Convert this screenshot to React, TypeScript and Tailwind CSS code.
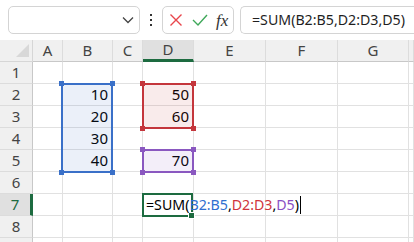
const cols = ["A", "B", "C", "D", "E", "F", "G", ""];
const rows = [1, 2, 3, 4, 5, 6, 7, 8, 9];

const values: Record<string, string> = {
  B2: "10",
  B3: "20",
  B4: "30",
  B5: "40",
  D2: "50",
  D3: "60",
  D5: "70",
};

const blue = "text-[#2f6fd0]";
const red = "text-[#d0343c]";
const purple = "text-[#8a4fc4]";

function Handle({ className }: { className: string }) {
  return <div className={`absolute w-[5px] h-[5px] ${className}`} />;
}

function Range({ box, color, fill }: { box: string; color: string; fill: string }) {
  return (
    <div className={`absolute border-2 ${box} ${color} ${fill}`}>
      <Handle className="-left-[4px] -top-[4px] bg-current" />
      <Handle className="-right-[4px] -top-[4px] bg-current" />
      <Handle className="-left-[4px] -bottom-[4px] bg-current" />
      <Handle className="-right-[4px] -bottom-[4px] bg-current" />
    </div>
  );
}

export default function App() {
  return (
    <div className="w-[414px] h-[242px] overflow-hidden bg-white font-['Noto_Sans','Open_Sans',sans-serif] text-[#1f1f1f]">
      {/* formula bar */}
      <div className="h-[40px] flex items-start pt-[6px] pl-[8px] gap-0">
        <div className="w-[132px] h-[28px] rounded-[5px] border border-[#d4d4d4] flex items-center justify-end pr-[5px]">
          <svg width="12" height="8" viewBox="0 0 12 8" fill="none" stroke="#444" strokeWidth="1.3">
            <path d="M1 1.5 L6 6.5 L11 1.5" />
          </svg>
        </div>
        <div className="w-[22px] h-[28px] flex flex-col items-center justify-center gap-[3px]">
          <span className="w-[2px] h-[2px] bg-[#333]" />
          <span className="w-[2px] h-[2px] bg-[#333]" />
          <span className="w-[2px] h-[2px] bg-[#333]" />
        </div>
        <div className="w-[72px] h-[28px] rounded-[5px] border border-[#d4d4d4] flex items-center pl-[6px] gap-[9px]">
          <svg width="14" height="14" viewBox="0 0 14 14" stroke="#e8464c" strokeWidth="1.4">
            <path d="M1.5 1.5 L12.5 12.5 M12.5 1.5 L1.5 12.5" />
          </svg>
          <svg width="16" height="14" viewBox="0 0 16 14" fill="none" stroke="#3fa85a" strokeWidth="1.4">
            <path d="M1 7 L6 12 L15 2" />
          </svg>
          <span className="font-['Liberation_Serif',serif] italic text-[17px] leading-none text-[#333] -ml-[1px]">
            fx
          </span>
        </div>
        <div className="ml-[6px] flex-1 h-[28px] rounded-l-[5px] border border-r-0 border-[#d4d4d4] flex items-center pl-[11px] text-[14.2px] whitespace-nowrap">
          =SUM(B2:B5,D2:D3,D5)
        </div>
      </div>

      {/* grid */}
      <div className="relative">
        <div className="grid grid-cols-[33px_30px_50px_30px_51px_72px_72px_71px_1fr] auto-rows-[22px]">
          <div className="bg-[#f0f0f0] border-r border-b border-[#d6d6d6] relative">
            <svg className="absolute right-[3px] bottom-[4px]" width="13" height="13" viewBox="0 0 13 13">
              <path d="M13 0 L13 13 L0 13 Z" fill="#d8d8d8" />
            </svg>
          </div>
          {cols.map((c, i) => (
            <div
              key={i}
              className={`flex items-center justify-center text-[15px] text-[#444] border-r border-[#dcdcdc] ${
                c === "D"
                  ? "bg-[#e0e0e0] border-b-[3px] border-b-[#1d6b40] text-[#1d6b40]"
                  : "bg-[#f0f0f0] border-b border-b-[#c8c8c8]"
              }`}
            >
              {c}
            </div>
          ))}
          {rows.map((r) => (
            <div key={r} className="contents">
              <div
                className={`flex items-center justify-center text-[15px] border-b border-[#dcdcdc] ${
                  r === 7
                    ? "bg-[#e0e0e0] border-r-[3px] border-r-[#1d6b40] text-[#1d6b40]"
                    : "bg-[#f0f0f0] border-r border-r-[#c8c8c8] text-[#444]"
                }`}
              >
                {r < 9 ? r : ""}
              </div>
              {cols.map((c, i) => {
                const id = `${c}${r}`;
                return (
                  <div
                    key={i}
                    className="relative border-r border-b border-[#e1e1e1] flex items-center justify-end pr-[4px] text-[15px] text-black"
                  >
                    {values[id]}
                    {id === "D7" && (
                      <div className="absolute left-[3px] top-0 h-full flex items-center whitespace-nowrap z-10 text-[14.2px]">
                        <span>=SUM(</span>
                        <span className={blue}>B2:B5</span>
                        <span>,</span>
                        <span className={red}>D2:D3</span>
                        <span>,</span>
                        <span className={purple}>D5</span>
                        <span>)</span>
                        <span className="w-[1px] h-[18px] bg-black ml-[1px]" />
                      </div>
                    )}
                  </div>
                );
              })}
            </div>
          ))}
        </div>

        {/* reference ranges */}
        <Range box="left-[61px] top-[43px] w-[52px] h-[90px]" color="border-[#3a70c8] text-[#3a70c8]" fill="bg-[#3a70c8]/10" />
        <Range box="left-[142px] top-[43px] w-[52px] h-[46px]" color="border-[#c4363c] text-[#c4363c]" fill="bg-[#c4363c]/10" />
        <Range box="left-[142px] top-[109px] w-[52px] h-[24px]" color="border-[#8a58c0] text-[#8a58c0]" fill="bg-[#8a58c0]/10" />

        {/* active cell */}
        <div className="absolute left-[142px] top-[153px] w-[51px] h-[24px] border-2 border-[#1d6b40]">
          <div className="absolute -right-[4px] -bottom-[4px] w-[5px] h-[5px] bg-[#1d6b40] border border-white box-content" />
        </div>
      </div>
    </div>
  );
}
